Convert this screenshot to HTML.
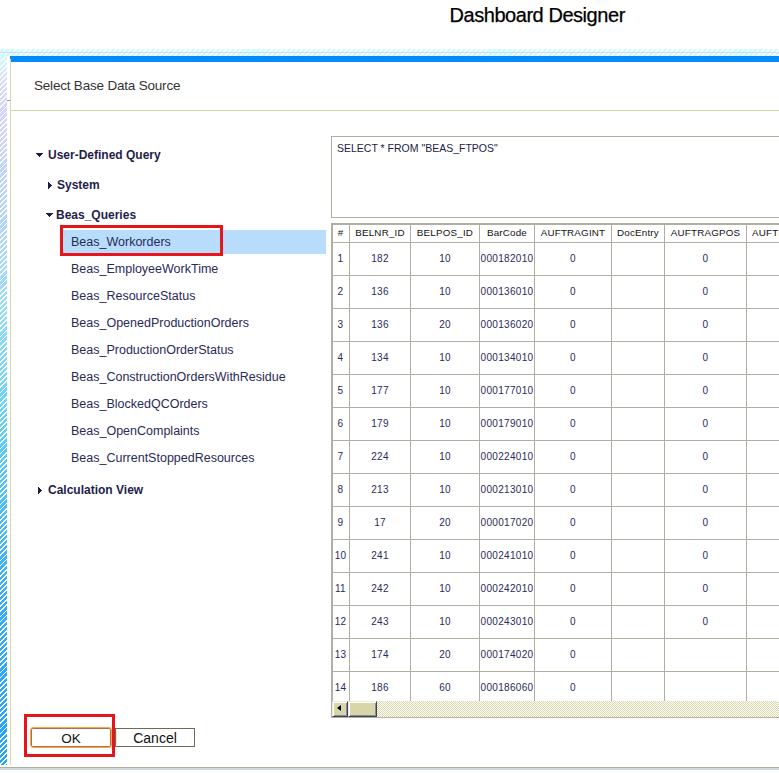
<!DOCTYPE html>
<html><head><meta charset="utf-8">
<style>
html,body{margin:0;padding:0;width:779px;height:773px;overflow:hidden;background:#fff;position:relative}
body{font-family:"Liberation Sans",sans-serif}
.a{position:absolute}
#title{position:absolute;left:449.5px;top:3.5px;font-size:20px;letter-spacing:-0.45px;-webkit-text-stroke:0.25px #000;color:#000;line-height:22px;white-space:nowrap}
#hatchTop{position:absolute;left:0;top:49px;width:779px;height:7px;
 background:repeating-linear-gradient(135deg,#fff 0 1.35px,#cdfcfd 1.35px 3.55px)}
#hatchTopLine{position:absolute;left:0;top:52px;width:779px;height:1px;background:#dcd6f8}
#hatchLeft{position:absolute;left:0;top:56px;width:7px;height:709px;
 background:repeating-linear-gradient(135deg,rgba(255,255,255,1) 0 1.3px,rgba(255,255,255,0) 1.3px 3.6px),linear-gradient(#d0fcfc 0px,#d8d8fc 30px,#d4d4fc 64px,#b8d4fc 144px,#9cdcfc 244px,#5cd0fa 374px,#38acfc 534px,#20a4fc 709px)}
#blueBar{position:absolute;left:10px;top:56px;width:769px;height:6px;background:#008cff}
#dlgLeft{position:absolute;left:10px;top:59px;width:1px;height:706px;background:#d8d8ac}
#hdr{position:absolute;left:34px;top:77.5px;font-size:13.5px;letter-spacing:-0.2px;color:#333;line-height:16px;white-space:nowrap}
#hdrLine{position:absolute;left:11px;top:110px;width:768px;height:1px;background:#d6d6a8}
.tb{position:absolute;white-space:nowrap;font-weight:bold;font-size:12px;color:#1e1e4a;line-height:15px}
.tri-d{position:absolute;width:0;height:0;border-left:3.5px solid transparent;border-right:3.5px solid transparent;border-top:4px solid #1e1e4a}
.tri-r{position:absolute;width:0;height:0;border-top:4px solid transparent;border-bottom:4px solid transparent;border-left:4px solid #1e1e4a}
#sel{position:absolute;left:60px;top:230px;width:266px;height:24px;background:#b8dcfc}
#selBox{position:absolute;left:60px;top:225px;width:157px;height:25px;border:3px solid #e8141c}
.ti{position:absolute;left:71px;white-space:nowrap;font-size:12.5px;color:#2a2a58;line-height:15px}
#sql{position:absolute;left:331px;top:136px;width:460px;height:80px;border:1px solid #b0b0a0;background:#fff}
#sqlt{position:absolute;left:337px;top:142px;font-size:10.5px;color:#22224a;white-space:nowrap;line-height:12px}
#tbl{position:absolute;left:331px;top:223px;width:460px;height:492px;border-left:2px solid #b0b0a2;border-top:2px solid #b0b0a2;border-bottom:1px solid #b0b0a2}
.vl{position:absolute;top:225px;width:1px;height:476px;background:#b0b0a2}
.hl{position:absolute;left:333px;width:446px;height:1px;background:#b0b0a2}
.th{position:absolute;top:225px;height:16px;line-height:16px;text-align:center;font-size:9.8px;letter-spacing:0.2px;color:#111;white-space:nowrap;overflow:visible}
.td{position:absolute;height:32px;line-height:32px;text-align:center;font-size:10px;letter-spacing:0.3px;color:#2a2a5a;white-space:nowrap}
#sb{position:absolute;left:332px;top:701px;width:447px;height:16px;
 background-color:#fff;background-image:linear-gradient(45deg,#d8d6a8 25%,transparent 25%,transparent 75%,#d8d6a8 75%),linear-gradient(45deg,#d8d6a8 25%,transparent 25%,transparent 75%,#d8d6a8 75%);background-size:2px 2px;background-position:0 0,1px 1px}
.btn3d{position:absolute;top:701px;height:16px;box-sizing:border-box;background:#d8d6a8;
 border-top:1px solid #ecebd4;border-left:1px solid #ecebd4;border-right:1px solid #404058;border-bottom:1px solid #404058;
 box-shadow:inset 1px 1px 0 #fff, inset -1px -1px 0 #8a8aa0}
#arrow{position:absolute;left:337px;top:705px;width:0;height:0;border-top:3.5px solid transparent;border-bottom:3.5px solid transparent;border-right:4px solid #000}
#redOk{position:absolute;left:24px;top:714px;width:85px;height:37px;border:3px solid #e8141c}
#ok{position:absolute;left:30px;top:727px;width:82px;height:21px;box-sizing:border-box;border:1px solid #f5a83c;border-radius:3px;
 box-shadow:inset 0 0 0 1px #b86a50;background:#fff;font-size:13.5px;line-height:21px;text-align:center;color:#111}
#cancel{position:absolute;left:115px;top:728px;width:80px;height:19px;box-sizing:border-box;border:1px solid #6c6c54;background:#fff;
 font-size:14px;line-height:19px;text-align:center;color:#111}
#btmLine{position:absolute;left:0;top:767px;width:779px;height:3px;background:linear-gradient(#b0b0a0 0 1px,#c8dcf8 1px 2px,#dcdcb4 2px 3px)}
</style></head><body>
<div id="title">Dashboard Designer</div>
<div id="hatchTop"></div><div id="hatchTopLine"></div>
<div id="hatchLeft"></div>
<div id="blueBar"></div>
<div id="dlgLeft"></div>
<div class="a" style="left:7px;top:100px;width:3px;height:1px;background:#9a9a88"></div>
<div id="hdr">Select Base Data Source</div>
<div id="hdrLine"></div>

<svg class="a" style="left:36px;top:153px" width="7" height="4" shape-rendering="crispEdges"><path d="M0 0h7v1h-1v1h-1v1h-1v1h-1v-1h-1v-1h-1v-1h-1z" fill="#1c1c44"/></svg>
<div class="tb" style="left:48px;top:148px">User-Defined Query</div>
<svg class="a" style="left:48px;top:182px" width="4" height="7" shape-rendering="crispEdges"><path d="M0 0v7h1v-1h1v-1h1v-1h1v-1h-1v-1h-1v-1h-1v-1z" fill="#1c1c44"/></svg>
<div class="tb" style="left:57px;top:178px">System</div>
<svg class="a" style="left:46px;top:213px" width="7" height="4" shape-rendering="crispEdges"><path d="M0 0h7v1h-1v1h-1v1h-1v1h-1v-1h-1v-1h-1v-1h-1z" fill="#1c1c44"/></svg>
<div class="tb" style="left:56px;top:208px">Beas_Queries</div>
<div id="sel"></div>
<div class="ti" style="top:235px">Beas_Workorders</div>
<div class="ti" style="top:262px">Beas_EmployeeWorkTime</div>
<div class="ti" style="top:289px">Beas_ResourceStatus</div>
<div class="ti" style="top:316px">Beas_OpenedProductionOrders</div>
<div class="ti" style="top:343px">Beas_ProductionOrderStatus</div>
<div class="ti" style="top:370px">Beas_ConstructionOrdersWithResidue</div>
<div class="ti" style="top:397px">Beas_BlockedQCOrders</div>
<div class="ti" style="top:424px">Beas_OpenComplaints</div>
<div class="ti" style="top:451px">Beas_CurrentStoppedResources</div>
<div id="selBox"></div>
<svg class="a" style="left:38px;top:487px" width="4" height="7" shape-rendering="crispEdges"><path d="M0 0v7h1v-1h1v-1h1v-1h1v-1h-1v-1h-1v-1h-1v-1z" fill="#1c1c44"/></svg>
<div class="tb" style="left:48px;top:483px">Calculation View</div>

<div id="sql"></div>
<div id="sqlt">SELECT * FROM "BEAS_FTPOS"</div>
<div id="tbl"></div>
<div class="vl" style="left:349px"></div>
<div class="vl" style="left:410px"></div>
<div class="vl" style="left:479px"></div>
<div class="vl" style="left:534px"></div>
<div class="vl" style="left:611px"></div>
<div class="vl" style="left:664px"></div>
<div class="vl" style="left:746px"></div>
<div class="hl" style="top:242px"></div>
<div class="hl" style="top:275px"></div>
<div class="hl" style="top:308px"></div>
<div class="hl" style="top:341px"></div>
<div class="hl" style="top:374px"></div>
<div class="hl" style="top:407px"></div>
<div class="hl" style="top:440px"></div>
<div class="hl" style="top:473px"></div>
<div class="hl" style="top:506px"></div>
<div class="hl" style="top:539px"></div>
<div class="hl" style="top:572px"></div>
<div class="hl" style="top:605px"></div>
<div class="hl" style="top:638px"></div>
<div class="hl" style="top:671px"></div>
<div class="th" style="left:332px;width:17px">#</div>
<div class="th" style="left:350px;width:60px">BELNR_ID</div>
<div class="th" style="left:411px;width:68px">BELPOS_ID</div>
<div class="th" style="left:480px;width:54px">BarCode</div>
<div class="th" style="left:535px;width:76px">AUFTRAGINT</div>
<div class="th" style="left:612px;width:52px">DocEntry</div>
<div class="th" style="left:665px;width:81px">AUFTRAGPOS</div>
<div class="th" style="left:752px;text-align:left">AUFTRAGSTATUS</div>
<div class="td" style="left:332px;top:243px;width:17px">1</div>
<div class="td" style="left:350px;top:243px;width:60px">182</div>
<div class="td" style="left:411px;top:243px;width:68px">10</div>
<div class="td" style="left:480px;top:243px;width:54px">000182010</div>
<div class="td" style="left:535px;top:243px;width:76px">0</div>
<div class="td" style="left:665px;top:243px;width:81px">0</div>
<div class="td" style="left:332px;top:276px;width:17px">2</div>
<div class="td" style="left:350px;top:276px;width:60px">136</div>
<div class="td" style="left:411px;top:276px;width:68px">10</div>
<div class="td" style="left:480px;top:276px;width:54px">000136010</div>
<div class="td" style="left:535px;top:276px;width:76px">0</div>
<div class="td" style="left:665px;top:276px;width:81px">0</div>
<div class="td" style="left:332px;top:309px;width:17px">3</div>
<div class="td" style="left:350px;top:309px;width:60px">136</div>
<div class="td" style="left:411px;top:309px;width:68px">20</div>
<div class="td" style="left:480px;top:309px;width:54px">000136020</div>
<div class="td" style="left:535px;top:309px;width:76px">0</div>
<div class="td" style="left:665px;top:309px;width:81px">0</div>
<div class="td" style="left:332px;top:342px;width:17px">4</div>
<div class="td" style="left:350px;top:342px;width:60px">134</div>
<div class="td" style="left:411px;top:342px;width:68px">10</div>
<div class="td" style="left:480px;top:342px;width:54px">000134010</div>
<div class="td" style="left:535px;top:342px;width:76px">0</div>
<div class="td" style="left:665px;top:342px;width:81px">0</div>
<div class="td" style="left:332px;top:375px;width:17px">5</div>
<div class="td" style="left:350px;top:375px;width:60px">177</div>
<div class="td" style="left:411px;top:375px;width:68px">10</div>
<div class="td" style="left:480px;top:375px;width:54px">000177010</div>
<div class="td" style="left:535px;top:375px;width:76px">0</div>
<div class="td" style="left:665px;top:375px;width:81px">0</div>
<div class="td" style="left:332px;top:408px;width:17px">6</div>
<div class="td" style="left:350px;top:408px;width:60px">179</div>
<div class="td" style="left:411px;top:408px;width:68px">10</div>
<div class="td" style="left:480px;top:408px;width:54px">000179010</div>
<div class="td" style="left:535px;top:408px;width:76px">0</div>
<div class="td" style="left:665px;top:408px;width:81px">0</div>
<div class="td" style="left:332px;top:441px;width:17px">7</div>
<div class="td" style="left:350px;top:441px;width:60px">224</div>
<div class="td" style="left:411px;top:441px;width:68px">10</div>
<div class="td" style="left:480px;top:441px;width:54px">000224010</div>
<div class="td" style="left:535px;top:441px;width:76px">0</div>
<div class="td" style="left:665px;top:441px;width:81px">0</div>
<div class="td" style="left:332px;top:474px;width:17px">8</div>
<div class="td" style="left:350px;top:474px;width:60px">213</div>
<div class="td" style="left:411px;top:474px;width:68px">10</div>
<div class="td" style="left:480px;top:474px;width:54px">000213010</div>
<div class="td" style="left:535px;top:474px;width:76px">0</div>
<div class="td" style="left:665px;top:474px;width:81px">0</div>
<div class="td" style="left:332px;top:507px;width:17px">9</div>
<div class="td" style="left:350px;top:507px;width:60px">17</div>
<div class="td" style="left:411px;top:507px;width:68px">20</div>
<div class="td" style="left:480px;top:507px;width:54px">000017020</div>
<div class="td" style="left:535px;top:507px;width:76px">0</div>
<div class="td" style="left:665px;top:507px;width:81px">0</div>
<div class="td" style="left:332px;top:540px;width:17px">10</div>
<div class="td" style="left:350px;top:540px;width:60px">241</div>
<div class="td" style="left:411px;top:540px;width:68px">10</div>
<div class="td" style="left:480px;top:540px;width:54px">000241010</div>
<div class="td" style="left:535px;top:540px;width:76px">0</div>
<div class="td" style="left:665px;top:540px;width:81px">0</div>
<div class="td" style="left:332px;top:573px;width:17px">11</div>
<div class="td" style="left:350px;top:573px;width:60px">242</div>
<div class="td" style="left:411px;top:573px;width:68px">10</div>
<div class="td" style="left:480px;top:573px;width:54px">000242010</div>
<div class="td" style="left:535px;top:573px;width:76px">0</div>
<div class="td" style="left:665px;top:573px;width:81px">0</div>
<div class="td" style="left:332px;top:606px;width:17px">12</div>
<div class="td" style="left:350px;top:606px;width:60px">243</div>
<div class="td" style="left:411px;top:606px;width:68px">10</div>
<div class="td" style="left:480px;top:606px;width:54px">000243010</div>
<div class="td" style="left:535px;top:606px;width:76px">0</div>
<div class="td" style="left:665px;top:606px;width:81px">0</div>
<div class="td" style="left:332px;top:639px;width:17px">13</div>
<div class="td" style="left:350px;top:639px;width:60px">174</div>
<div class="td" style="left:411px;top:639px;width:68px">20</div>
<div class="td" style="left:480px;top:639px;width:54px">000174020</div>
<div class="td" style="left:535px;top:639px;width:76px">0</div>
<div class="td" style="left:332px;top:672px;width:17px">14</div>
<div class="td" style="left:350px;top:672px;width:60px">186</div>
<div class="td" style="left:411px;top:672px;width:68px">60</div>
<div class="td" style="left:480px;top:672px;width:54px">000186060</div>
<div class="td" style="left:535px;top:672px;width:76px">0</div>
<div id="sb"></div>
<div class="btn3d" style="left:332px;width:16px"></div>
<div id="arrow"></div>
<div class="btn3d" style="left:348px;width:29px"></div>

<div id="redOk"></div>
<div id="ok">OK</div>
<div id="cancel">Cancel</div>
<div class="a" style="left:116px;top:731px;width:1px;height:13px;background:#f4f4a0"></div>
<div id="btmLine"></div>
</body></html>
